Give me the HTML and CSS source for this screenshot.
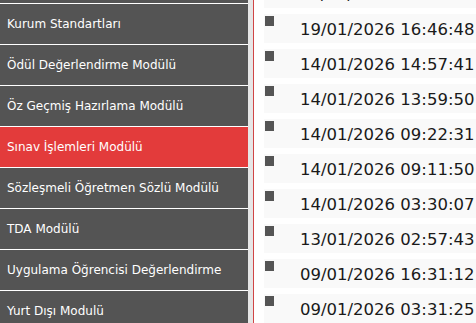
FILE: index.html
```html
<!DOCTYPE html>
<html lang="tr">
<head>
<meta charset="utf-8">
<link rel="stylesheet" href="styles.css">
</head>
<body>
<div class="page">
  <nav class="sidebar">
    <ul class="menu">
      <li class="item">Kurum Bilgileri</li>
      <li class="item">Kurum Standartları</li>
      <li class="item">Ödül Değerlendirme Modülü</li>
      <li class="item">Öz Geçmiş Hazırlama Modülü</li>
      <li class="item active">Sınav İşlemleri Modülü</li>
      <li class="item">Sözleşmeli Öğretmen Sözlü Modülü</li>
      <li class="item">TDA Modülü</li>
      <li class="item">Uygulama Öğrencisi Değerlendirme</li>
      <li class="item">Yurt Dışı Modulü</li>
    </ul>
  </nav>
  <div class="gutter"></div>
  <main class="content">
    <ul class="dates">
      <li class="row"><span class="bullet"></span><span class="date">20/01/2026 10:12:05</span></li>
      <li class="row"><span class="bullet"></span><span class="date">19/01/2026 16:46:48</span></li>
      <li class="row"><span class="bullet"></span><span class="date">14/01/2026 14:57:41</span></li>
      <li class="row"><span class="bullet"></span><span class="date">14/01/2026 13:59:50</span></li>
      <li class="row"><span class="bullet"></span><span class="date">14/01/2026 09:22:31</span></li>
      <li class="row"><span class="bullet"></span><span class="date">14/01/2026 09:11:50</span></li>
      <li class="row"><span class="bullet"></span><span class="date">14/01/2026 03:30:07</span></li>
      <li class="row"><span class="bullet"></span><span class="date">13/01/2026 02:57:43</span></li>
      <li class="row"><span class="bullet"></span><span class="date">09/01/2026 16:31:12</span></li>
      <li class="row"><span class="bullet"></span><span class="date">09/01/2026 03:31:25</span></li>
    </ul>
  </main>
</div>
</body>
</html>
```
FILE: styles.css
```css
html, body {
  margin: 0;
  padding: 0;
  background: #ffffff;
  overflow: hidden;
}
.page {
  display: flex;
  width: 476px;
  height: 323px;
  overflow: hidden;
}
.sidebar {
  width: 248px;
  flex: none;
  background: #545454;
}
.menu {
  list-style: none;
  margin: -37px 0 0 0;
  padding: 0;
}
.item {
  height: 40px;
  line-height: 40px;
  border-bottom: 1px solid #ffffff;
  padding-left: 7px;
  color: #ffffff;
  font-family: "DejaVu Sans", Verdana, sans-serif;
  font-size: 12px;
  white-space: nowrap;
  overflow: hidden;
}
.item.active {
  background: #e33b3b;
}
.gutter {
  width: 5px;
  flex: none;
  background: #e6e6e6;
  border-right: 1px solid #d04545;
}
.content {
  flex: 1;
  background: #ffffff;
}
.dates {
  list-style: none;
  margin: -21px 0 0 0;
  padding: 0 0 0 10px;
}
.row {
  display: flex;
  align-items: flex-start;
  height: 29px;
  margin-bottom: 6px;
  background: #f9f9f9;
}
.bullet {
  width: 9px;
  height: 10px;
  margin: 2px 0 0 1px;
  background: #555555;
  flex: none;
}
.date {
  margin-left: 26px;
  padding-top: 6px;
  font-family: "DejaVu Sans", Verdana, sans-serif;
  font-size: 16.5px;
  line-height: 20px;
  color: #1a1a1a;
  white-space: nowrap;
}
```
